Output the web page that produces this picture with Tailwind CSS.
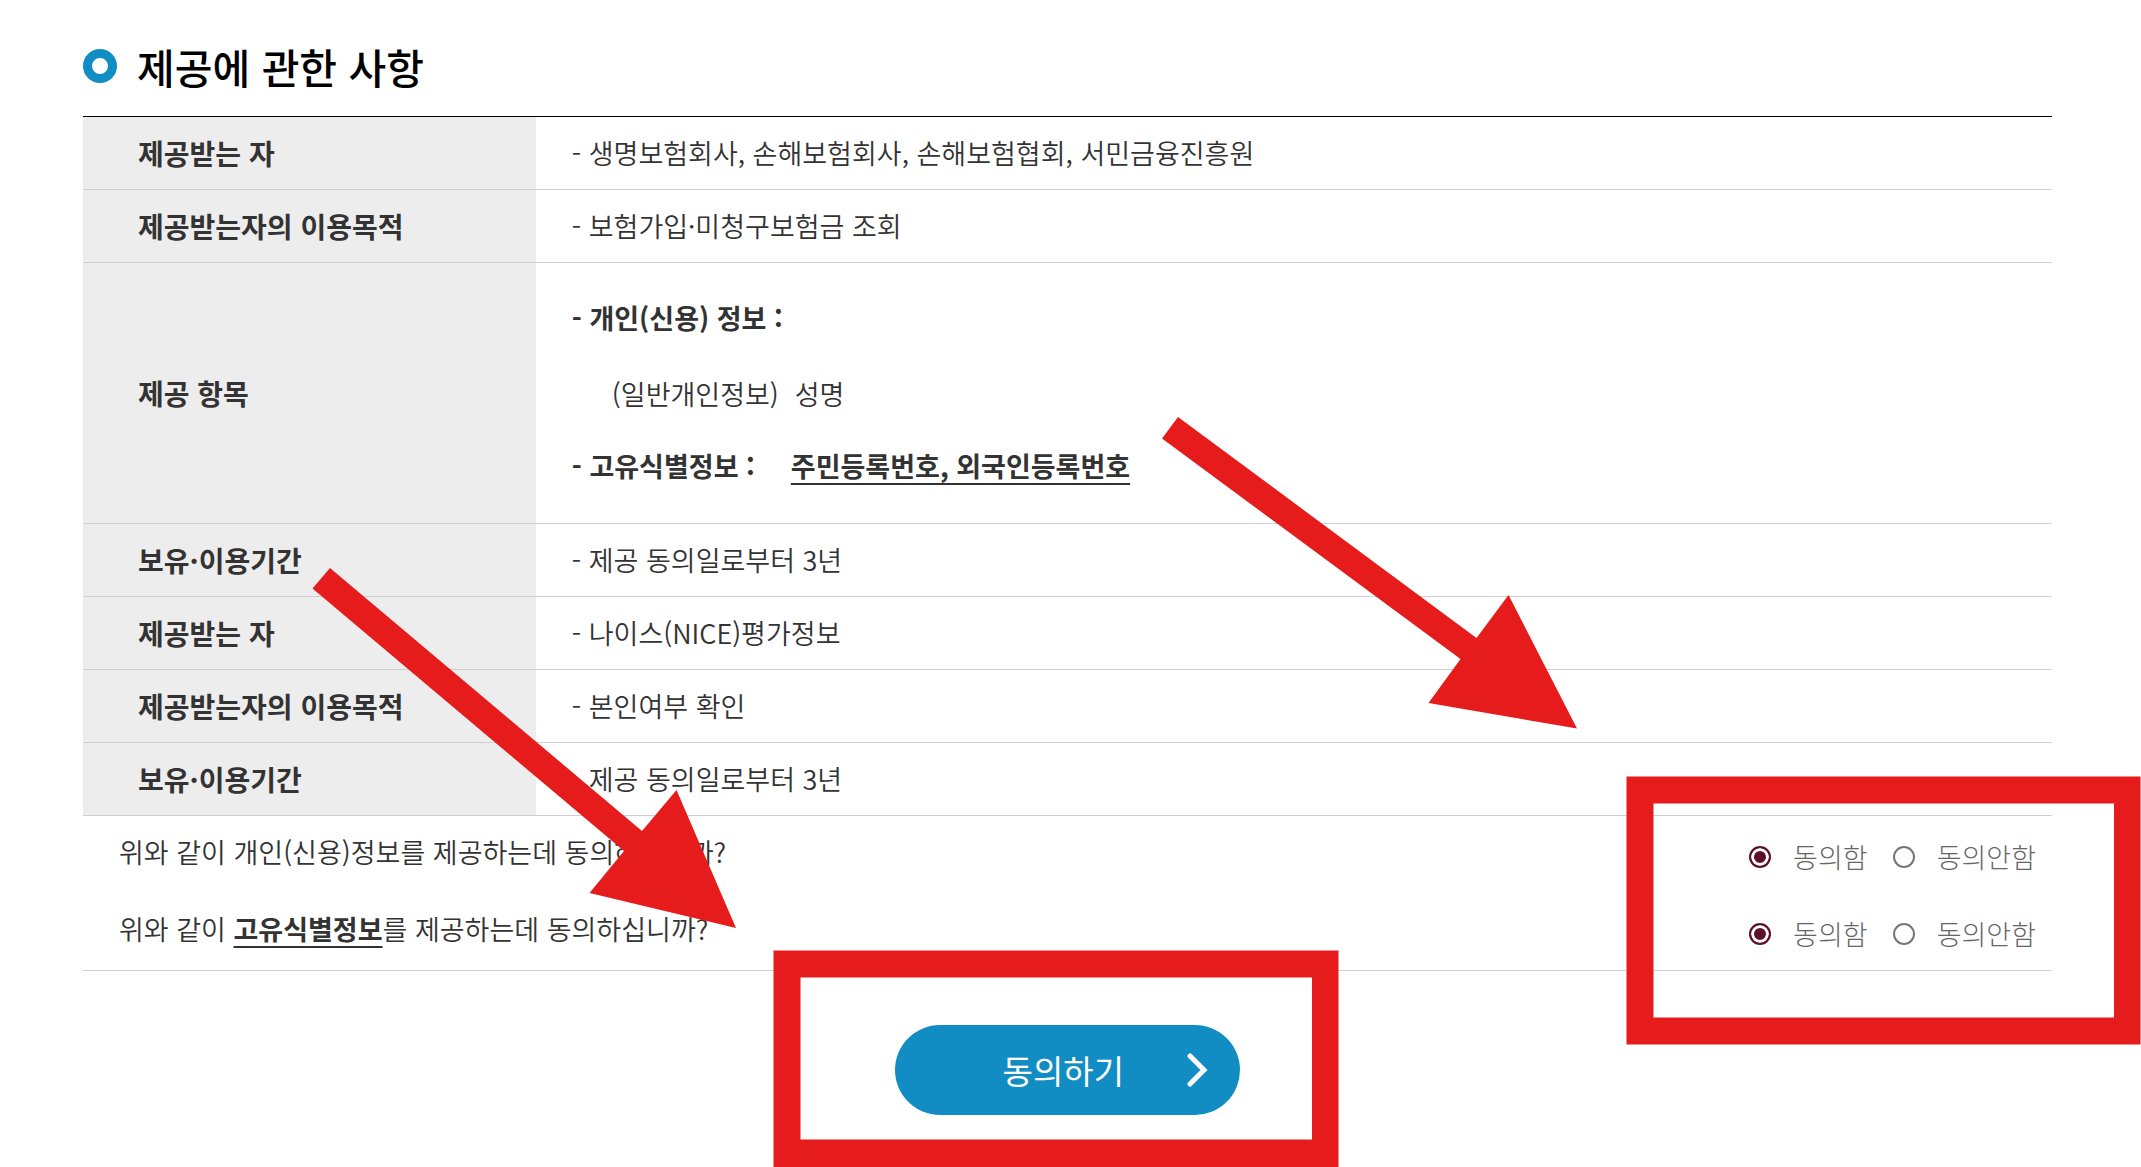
<!DOCTYPE html>
<html lang="ko">
<head>
  <meta charset="UTF-8">
  <meta name="viewport" content="width=device-width, initial-scale=1.0">
  <title>제공에 관한 사항</title>
  <script src="https://cdn.jsdelivr.net/npm/@tailwindcss/browser@4"></script>
</head>
<body class="relative min-h-screen bg-white font-['Noto_Sans_CJK_KR',sans-serif] text-[27px] leading-10 text-[#333]">

  <main class="pl-[83px] pr-[89px] pt-10">
    <!-- Title -->
    <header class="flex items-center gap-5 mb-6">
      <span class="size-[34px] rounded-full border-[9px] border-[#118dc4]"></span>
      <h1 class="text-[41px] leading-[52px] font-medium text-black">제공에 관한 사항</h1>
    </header>

    <!-- Provision details -->
    <table class="w-full table-fixed border-separate border-spacing-0 border-t border-black text-left">
      <colgroup>
        <col class="w-[23%]">
        <col>
      </colgroup>
      <tbody>
        <tr>
          <th scope="row" class="bg-[#ededed] border-b border-[#d0d0d0] py-4 pl-[55px] text-[28px] font-bold">제공받는 자</th>
          <td class="border-b border-[#d0d0d0] py-4 pl-9 font-[350]">- 생명보험회사, 손해보험회사, 손해보험협회, 서민금융진흥원</td>
        </tr>
        <tr>
          <th scope="row" class="bg-[#ededed] border-b border-[#d0d0d0] py-4 pl-[55px] text-[28px] font-bold">제공받는자의 이용목적</th>
          <td class="border-b border-[#d0d0d0] py-4 pl-9 font-[350]">- 보험가입·미청구보험금 조회</td>
        </tr>
        <tr>
          <th scope="row" class="bg-[#ededed] border-b border-[#d0d0d0] py-4 pl-[55px] text-[28px] font-bold">제공 항목</th>
          <td class="border-b border-[#d0d0d0] pt-[35px] pb-[37px] pl-9 font-[350]">
            <p class="font-bold">- 개인(신용) 정보 :</p>
            <p class="mt-9 pl-10 flex gap-4"><span>(일반개인정보)</span><span>성명</span></p>
            <p class="mt-8 font-bold flex gap-9"><span>- 고유식별정보 :</span><span class="underline underline-offset-6 decoration-2">주민등록번호, 외국인등록번호</span></p>
          </td>
        </tr>
        <tr>
          <th scope="row" class="bg-[#ededed] border-b border-[#d0d0d0] py-4 pl-[55px] text-[28px] font-bold">보유·이용기간</th>
          <td class="border-b border-[#d0d0d0] py-4 pl-9 font-[350]">- 제공 동의일로부터 3년</td>
        </tr>
        <tr>
          <th scope="row" class="bg-[#ededed] border-b border-[#d0d0d0] py-4 pl-[55px] text-[28px] font-bold">제공받는 자</th>
          <td class="border-b border-[#d0d0d0] py-4 pl-9 font-[350]">- 나이스(NICE)평가정보</td>
        </tr>
        <tr>
          <th scope="row" class="bg-[#ededed] border-b border-[#d0d0d0] py-4 pl-[55px] text-[28px] font-bold">제공받는자의 이용목적</th>
          <td class="border-b border-[#d0d0d0] py-4 pl-9 font-[350]">- 본인여부 확인</td>
        </tr>
        <tr>
          <th scope="row" class="bg-[#ededed] border-b border-[#d0d0d0] py-4 pl-[55px] text-[28px] font-bold">보유·이용기간</th>
          <td class="border-b border-[#d0d0d0] py-4 pl-9 font-[350]">- 제공 동의일로부터 3년</td>
        </tr>
      </tbody>
    </table>

    <!-- Consent questions -->
    <form id="consentForm">
      <div class="flex flex-col gap-[27px] border-b border-[#d0d0d0] pt-4 pb-[11px] pl-9 pr-4 font-[350]">
        <div class="flex justify-between items-start">
          <p>위와 같이 개인(신용)정보를 제공하는데 동의하십니까?</p>
          <div class="flex items-center leading-[50px] text-[#666] font-light">
            <input type="radio" id="creditYes" name="credit" checked class="appearance-none size-[22px] rounded-full border-2 border-[#767676] checked:border-[#5f1029] checked:bg-[#5f1029] checked:shadow-[inset_0_0_0_3px_white]">
            <label for="creditYes" class="pl-[22px] pr-[25px]">동의함</label>
            <input type="radio" id="creditNo" name="credit" class="appearance-none size-[22px] rounded-full border-2 border-[#767676] checked:border-[#5f1029] checked:bg-[#5f1029] checked:shadow-[inset_0_0_0_3px_white]">
            <label for="creditNo" class="pl-[22px]">동의안함</label>
          </div>
        </div>
        <div class="flex justify-between items-start">
          <p>위와 같이 <strong class="font-bold underline underline-offset-6 decoration-2">고유식별정보</strong>를 제공하는데 동의하십니까?</p>
          <div class="flex items-center leading-[50px] text-[#666] font-light">
            <input type="radio" id="uniqueYes" name="unique" checked class="appearance-none size-[22px] rounded-full border-2 border-[#767676] checked:border-[#5f1029] checked:bg-[#5f1029] checked:shadow-[inset_0_0_0_3px_white]">
            <label for="uniqueYes" class="pl-[22px] pr-[25px]">동의함</label>
            <input type="radio" id="uniqueNo" name="unique" class="appearance-none size-[22px] rounded-full border-2 border-[#767676] checked:border-[#5f1029] checked:bg-[#5f1029] checked:shadow-[inset_0_0_0_3px_white]">
            <label for="uniqueNo" class="pl-[22px]">동의안함</label>
          </div>
        </div>
      </div>

      <div class="flex justify-center pt-[54px]">
        <button type="submit" class="flex items-center justify-end gap-[62px] w-[345px] h-[90px] pr-8 rounded-full bg-[#118dc4] text-white text-[33px]">
          동의하기
          <svg class="w-[22px] h-[34px]" viewBox="0 0 22 34" fill="none" stroke="currentColor" stroke-width="5" stroke-linecap="round">
            <path d="M4 3l14 14L4 31" />
          </svg>
        </button>
      </div>
    </form>
  </main>

  <!-- Guide marks over the page -->
  <svg class="absolute left-0 top-0 w-[2141px] h-[1167px] pointer-events-none" viewBox="0 0 2141 1167" fill="#e61c1c" aria-hidden="true">
    <path d="M330 568L642 831L676.500 790L736 928L589.500 893L624 851L312.500 588.500Z" />
    <path d="M1178 417L1476.500 638L1508.500 595L1577 728.500L1428.500 703L1460.500 659L1162 438.500Z" />
    <path fill-rule="evenodd" d="M773.500 950.500H1338.500V1167H773.500ZM800.500 977.500V1139.500H1312V977.500Z" />
    <path fill-rule="evenodd" d="M1626.500 776.500H2140.500V1044.500H1626.500ZM1653.500 803.500V1017.500H2114V803.500Z" />
  </svg>

  <script>
    // Continue only when every item is agreed to
    document.getElementById("consentForm").addEventListener("submit", function (e) {
      e.preventDefault();
      const agreed = document.getElementById("creditYes").checked && document.getElementById("uniqueYes").checked;
      if (!agreed) {
        alert("모든 항목에 동의해 주세요.");
      }
    });
  </script>
</body>
</html>
